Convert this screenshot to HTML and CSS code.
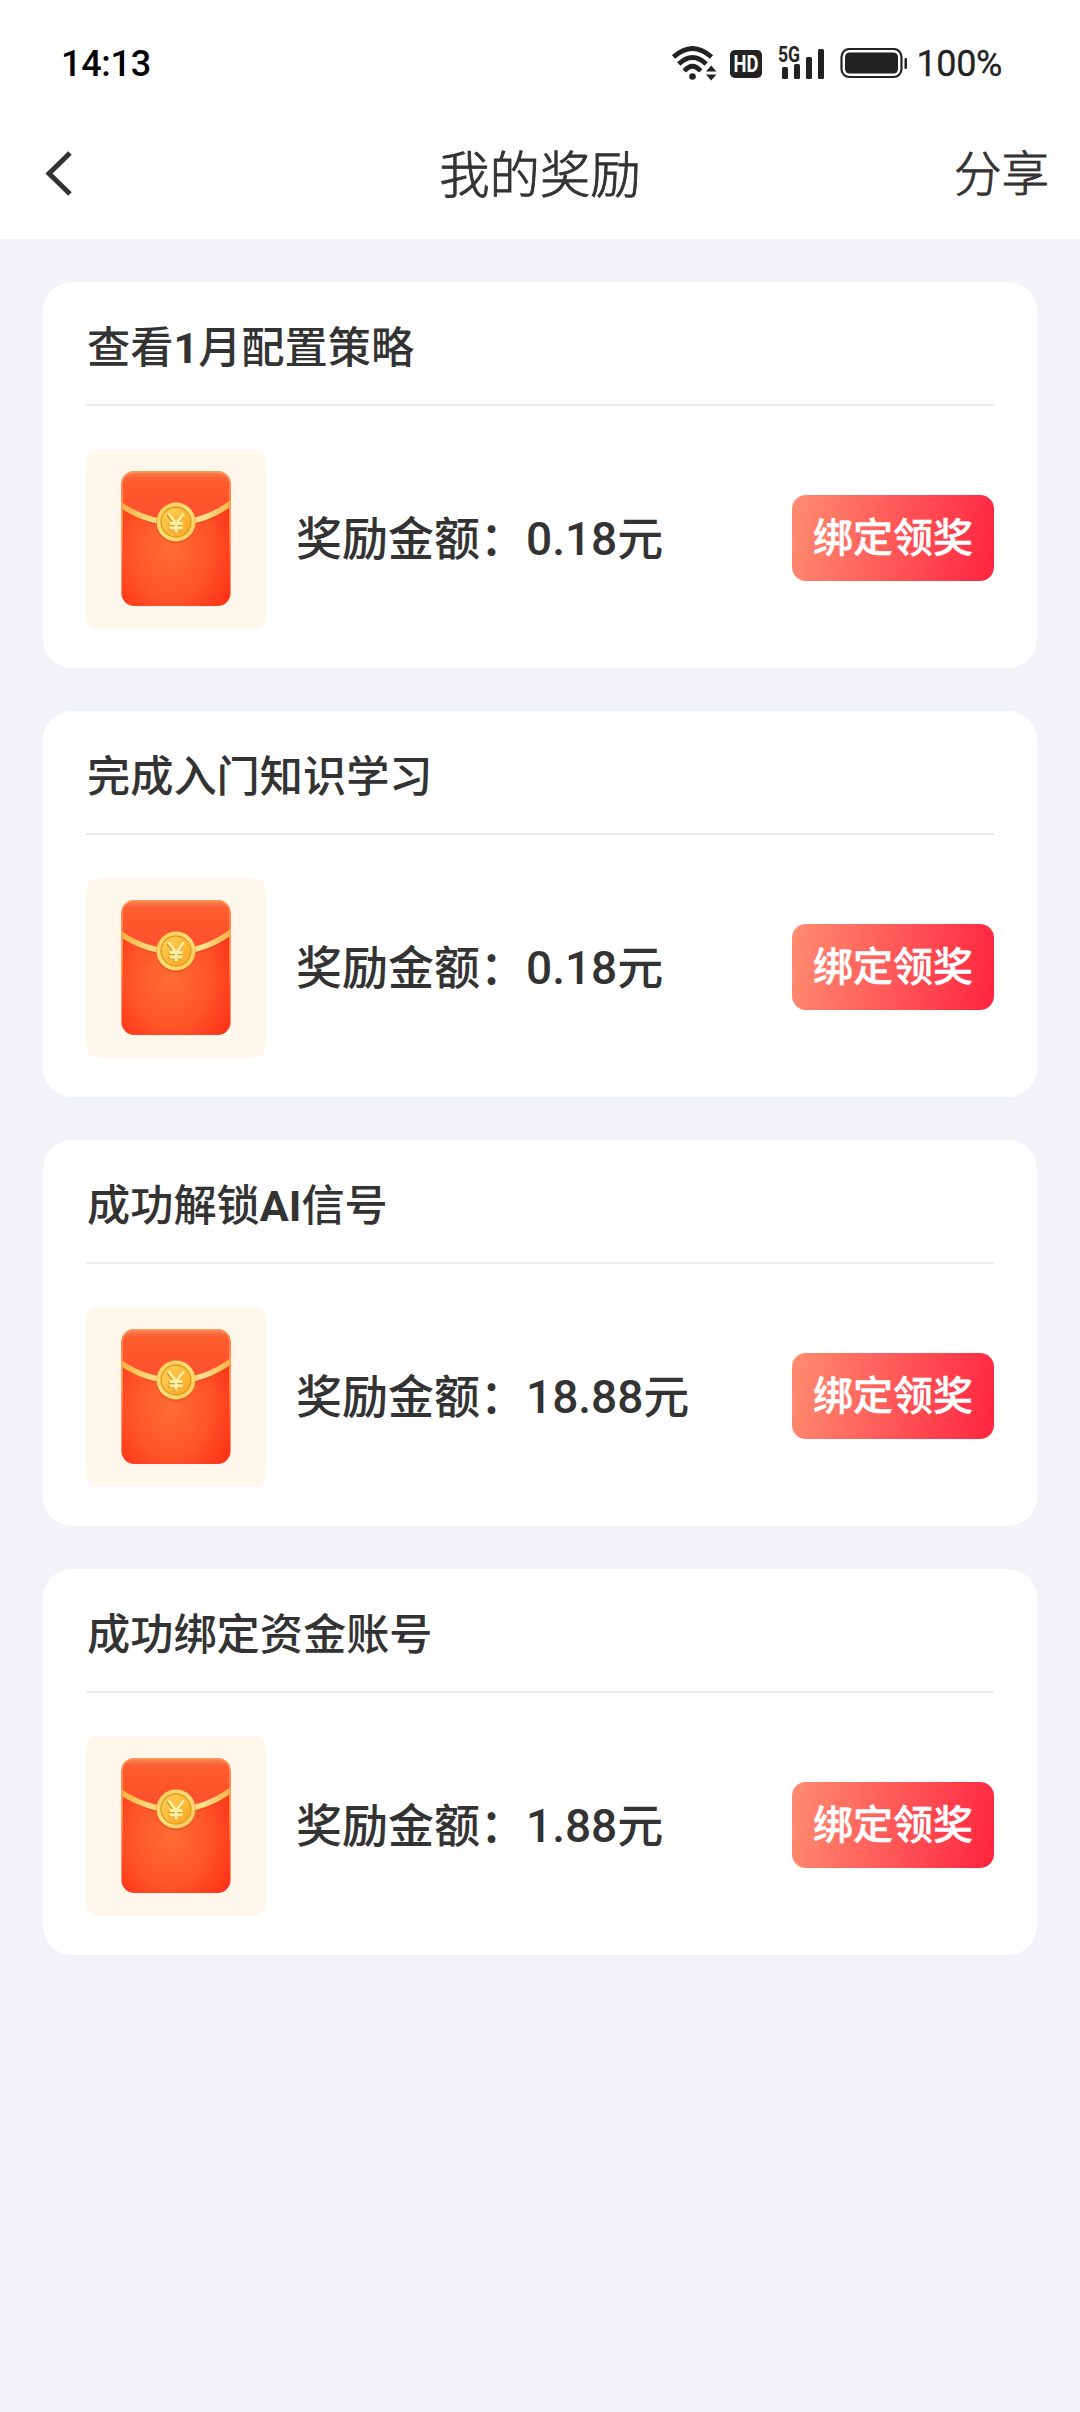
FILE: index.html
```html
<!DOCTYPE html>
<html lang="zh-CN">
<head>
<meta charset="utf-8">
<title>我的奖励</title>
<link rel="stylesheet" href="styles.css">
</head>
<body>
<svg class="defs" width="0" height="0" aria-hidden="true">
  <defs>
    <radialGradient id="body" cx=".45" cy=".58" r=".72">
      <stop offset="0" stop-color="#ff6d35"/><stop offset=".5" stop-color="#ff5529"/><stop offset="1" stop-color="#fd2813"/>
    </radialGradient>
    <linearGradient id="flap" x1="0" y1="0" x2="0" y2="1">
      <stop offset="0" stop-color="#f58a58"/><stop offset=".14" stop-color="#fd5f32"/><stop offset=".5" stop-color="#fd552b"/><stop offset="1" stop-color="#ff5033"/>
    </linearGradient>
    <linearGradient id="edge" x1="0" y1="0" x2="0" y2="1">
      <stop offset="0" stop-color="#ffb060" stop-opacity=".5"/><stop offset=".4" stop-color="#ffa03c" stop-opacity=".85"/><stop offset="1" stop-color="#ff3a18" stop-opacity=".2"/>
    </linearGradient>
    <linearGradient id="cord" x1="0" y1="0" x2="1" y2="0">
      <stop offset="0" stop-color="#f9ad3b"/><stop offset=".25" stop-color="#ffd877"/><stop offset=".75" stop-color="#ffe08a"/><stop offset="1" stop-color="#f9b03e"/>
    </linearGradient>
    <linearGradient id="rim" x1="0" y1="0" x2="1" y2="1">
      <stop offset="0" stop-color="#fbc94f"/><stop offset=".5" stop-color="#ffdf78"/><stop offset="1" stop-color="#fbc853"/>
    </linearGradient>
    <linearGradient id="coin" x1="0" y1="0" x2="1" y2="1">
      <stop offset="0" stop-color="#ffd25a"/><stop offset="1" stop-color="#fba51f"/>
    </linearGradient>
    <clipPath id="packet"><rect x="35.500" y="22" width="109" height="135" rx="13"/></clipPath>
    <symbol id="envelope" viewBox="0 0 180 180">
      <rect x="35.500" y="22" width="109" height="135" rx="13" fill="url(#body)"/>
      <g clip-path="url(#packet)">
        <path d="M35 22H145V54Q122 75 90 75Q57 75 35 54Z" fill="url(#flap)"/>
        <path d="M35 58Q62 77 90 77Q117 77 145 58" fill="none" stroke="#e0431a" stroke-opacity=".5" stroke-width="3"/>
        <path d="M34 55.500Q60 73.500 90 73.500Q119 73.500 146 53.500" fill="none" stroke="url(#cord)" stroke-width="5.500"/>
        <rect x="36" y="22.500" width="108" height="134" rx="12.500" fill="none" stroke="url(#edge)" stroke-width="2"/>
      </g>
      <circle cx="90" cy="74.500" r="20" fill="#d9481c" opacity=".45"/>
      <circle cx="90" cy="73" r="19.500" fill="url(#rim)"/>
      <circle cx="90" cy="73" r="15" fill="url(#coin)" stroke="#dc9a20" stroke-width="1.300"/>
      <g fill="none" stroke-width="2.800">
        <path d="M82.500 64.500l7.500 10L97.500 64.500M90 74V83.500M83.500 74.500H96.500M83.500 79H96.500" stroke="#d28d1c" transform="translate(-.8 .8)"/>
        <path d="M82.500 64.500l7.500 10L97.500 64.500M90 74V83.500M83.500 74.500H96.500M83.500 79H96.500" stroke="#fff0a6"/>
      </g>
    </symbol>
  </defs>
</svg>

<header class="top">
  <div class="status">
    <span class="time">14:13</span>
    <div class="indicators">
      <svg class="wifi" width="45" height="36" viewBox="0 0 45 36">
        <g fill="none" stroke="#222" stroke-width="4.800">
          <path d="M1.500 11Q20.500-6 39.500 11"/>
          <path d="M6.800 18Q20.500 5 34.200 18"/>
          <path d="M12.300 25Q20.500 15.500 28.700 25"/>
        </g>
        <circle cx="20.500" cy="30.500" r="3.300" fill="#222"/>
        <path d="M34 25.500l5.200-6 5.200 6zM34 28.500l5.200 6 5.200-6z" fill="#222"/>
      </svg>
      <span class="hd"><span class="hd-text">HD</span></span>
      <div class="cell">
        <svg width="48" height="34" viewBox="0 0 48 34" fill="#222">
          <rect x="4" y="20" width="6" height="12" rx="1.500"/><rect x="16" y="17" width="6" height="15" rx="1.500"/><rect x="28" y="10" width="6" height="22" rx="1.500"/><rect x="40" y="2" width="6" height="30" rx="1.500"/>
        </svg>
        <span class="gen">5G</span>
      </div>
      <svg class="battery" width="68" height="32" viewBox="0 0 68 32">
        <rect x="1.500" y="1" width="60" height="28" rx="8" fill="none" stroke="#222" stroke-width="2.200"/>
        <rect x="5" y="4.500" width="53" height="21" rx="4.500" fill="#222"/>
        <rect x="64.500" y="10" width="2.500" height="11" rx="1" fill="#222"/>
      </svg>
      <span class="percent">100%</span>
    </div>
  </div>
  <nav class="nav">
    <svg class="back" width="30" height="48" viewBox="0 0 30 48"><path d="M26 3L5 23.500L26 44" fill="none" stroke="#333" stroke-width="5"/></svg>
    <h1 class="heading">我的奖励</h1>
    <span class="share">分享</span>
  </nav>
</header>

<main class="list">
  <section class="card">
    <h2 class="title">查看<b>1</b>月配置策略</h2>
    <div class="reward">
      <div class="thumb"><svg width="180" height="180"><use href="#envelope"/></svg></div>
      <p class="amount">奖励金额：0.18元</p>
      <button class="claim">绑定领奖</button>
    </div>
  </section>
  <section class="card">
    <h2 class="title">完成入门知识学习</h2>
    <div class="reward">
      <div class="thumb"><svg width="180" height="180"><use href="#envelope"/></svg></div>
      <p class="amount">奖励金额：0.18元</p>
      <button class="claim">绑定领奖</button>
    </div>
  </section>
  <section class="card">
    <h2 class="title">成功解锁<b>AI</b>信号</h2>
    <div class="reward">
      <div class="thumb"><svg width="180" height="180"><use href="#envelope"/></svg></div>
      <p class="amount">奖励金额：18.88元</p>
      <button class="claim">绑定领奖</button>
    </div>
  </section>
  <section class="card">
    <h2 class="title">成功绑定资金账号</h2>
    <div class="reward">
      <div class="thumb"><svg width="180" height="180"><use href="#envelope"/></svg></div>
      <p class="amount">奖励金额：1.88元</p>
      <button class="claim">绑定领奖</button>
    </div>
  </section>
</main>
</body>
</html>
```
FILE: styles.css
```css
* { box-sizing: border-box; margin: 0; padding: 0; }

body {
  min-height: 2412px;
  background: #f2f3f8;
  color: #333;
  font-family: Roboto, "Noto Sans CJK SC", sans-serif;
}

svg { display: block; }
.defs { position: absolute; }

.top { height: 239px; background: #fff; }

.status {
  display: flex;
  justify-content: space-between;
  align-items: center;
  height: 127px;
  padding: 0 78px 0 61px;
}
.time { color: #000; font-size: 36px; font-weight: 500; letter-spacing: -.3px; }
.indicators { display: flex; align-items: center; color: #222; }
.hd {
  width: 32px;
  height: 28px;
  margin-left: 13px;
  border-radius: 5px;
  background: #222;
  color: #fff;
  font-size: 23px;
  font-weight: 700;
  line-height: 29px;
  text-align: center;
}
.hd-text { display: block; transform: scaleX(.8); }
.cell { position: relative; margin-left: 16px; }
.gen {
  position: absolute;
  left: 0;
  top: -1px;
  background: #fff;
  font-size: 22px;
  font-weight: 700;
  line-height: 17px;
  transform: scaleX(.8);
  transform-origin: left;
}
.battery { margin-left: 14px; }
.percent { margin-left: 9px; font-size: 36px; letter-spacing: -.4px; -webkit-text-stroke: .3px #222; }

.nav {
  display: grid;
  grid-template-columns: 1fr auto 1fr;
  align-items: center;
  height: 93px;
  padding: 0 31px 0 44px;
}
.heading, .share {
  font-weight: 300;
  -webkit-text-stroke: .9px #333;
}
.heading { margin-right: 13px; padding-top: 5px; font-size: 50.400px; line-height: 68px; }
.share { justify-self: end; padding-top: 2px; font-size: 47.500px; line-height: 64px; }

.list { display: grid; gap: 43px; padding: 43px; }
.card {
  height: 386px;
  padding: 0 43px;
  border-radius: 29px;
  background: #fff;
}
.title {
  height: 124px;
  padding-left: 1px;
  border-bottom: 2px solid #ebebeb;
  font-size: 43.200px;
  font-weight: 500;
  line-height: 134px;
}
.title b { font-weight: 700; }
.reward { display: flex; align-items: center; padding-top: 43px; }
.thumb { border-radius: 12px; background: #fff6ec; }
.amount { flex: 1; margin-left: 30px; padding-bottom: 9px; font-size: 46px; font-weight: 500; }
.claim {
  width: 202px;
  height: 86px;
  margin-bottom: 2px;
  padding-top: 1px;
  border: 0;
  border-radius: 14px;
  background: linear-gradient(100deg, #ff8d70, #ff2440);
  color: #fff;
  font: 500 40px/85px Roboto, "Noto Sans CJK SC", sans-serif;
  -webkit-text-stroke: .5px #fff;
}
```
